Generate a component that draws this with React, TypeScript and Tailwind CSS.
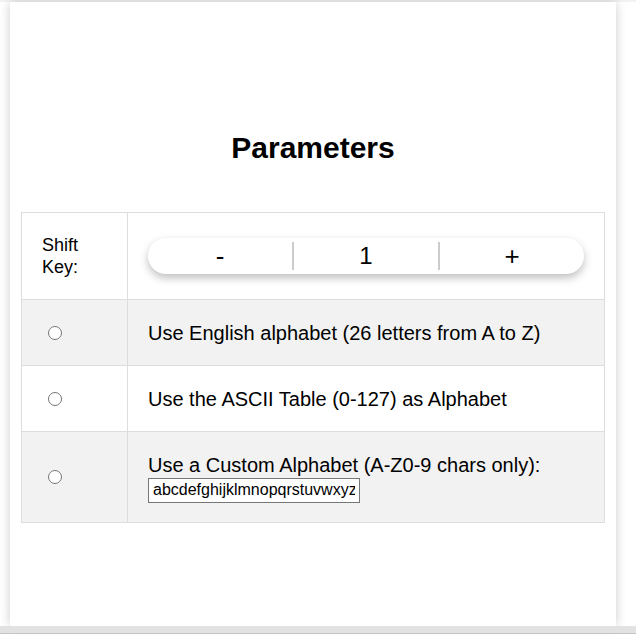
export default function App() {
  return (
    <div className="min-h-[641px] bg-white font-['Liberation_Sans',Arial,sans-serif] text-black">
      <div className="h-[2px] bg-[#f3f3f3]" />
      <div className="ml-[10px] h-[624px] w-[606px] bg-white px-[11px] shadow-[0_0_10px_rgba(0,0,0,0.2)]">
        <h1 className="pt-[128px] text-center text-[30px] font-bold leading-[36px]">Parameters</h1>
        <table className="mt-[46px] w-full border-collapse border border-[#dddddd] text-[20px]">
          <tbody>
            <tr className="h-[87px] bg-white">
              <td className="w-[106px] border border-[#dddddd] pl-[20px] text-[18px] leading-[22px]">
                Shift
                <br />
                Key:
              </td>
              <td className="border border-[#dddddd] px-[20px]">
                <div className="flex h-[36px] items-center rounded-[18px] bg-white shadow-[0_4px_8px_rgba(0,0,0,0.25)]">
                  <button className="flex-1 text-[26px] leading-none">-</button>
                  <div className="h-[28px] w-[2px] bg-[#cccccc]" />
                  <span className="flex-1 text-center text-[24px] leading-none">1</span>
                  <div className="h-[28px] w-[2px] bg-[#cccccc]" />
                  <button className="flex-1 text-[26px] leading-none">+</button>
                </div>
              </td>
            </tr>
            <tr className="h-[66px] bg-[#f2f2f2]">
              <td className="border border-[#dddddd] pl-[26px]">
                <input type="radio" name="alpha" className="block h-[14px] w-[14px]" />
              </td>
              <td className="border border-[#dddddd] px-[20px]">Use English alphabet (26 letters from A to Z)</td>
            </tr>
            <tr className="h-[66px] bg-white">
              <td className="border border-[#dddddd] pl-[26px]">
                <input type="radio" name="alpha" className="block h-[14px] w-[14px]" />
              </td>
              <td className="border border-[#dddddd] px-[20px]">Use the ASCII Table (0-127) as Alphabet</td>
            </tr>
            <tr className="h-[91px] bg-[#f2f2f2]">
              <td className="border border-[#dddddd] pl-[26px]">
                <input type="radio" name="alpha" className="block h-[14px] w-[14px]" />
              </td>
              <td className="border border-[#dddddd] px-[20px]">
                <div className="leading-[26px]">Use a Custom Alphabet (A-Z0-9 chars only):</div>
                <input
                  type="text"
                  defaultValue="abcdefghijklmnopqrstuvwxyz0123456789"
                  className="block h-[25px] w-[212px] border border-[#767676] bg-white px-[4px] text-[16px] outline-none"
                />
              </td>
            </tr>
          </tbody>
        </table>
      </div>
      <div className="h-[8px] border-b border-[#c4c4c4] bg-[#e2e2e2]" />
    </div>
  );
}
